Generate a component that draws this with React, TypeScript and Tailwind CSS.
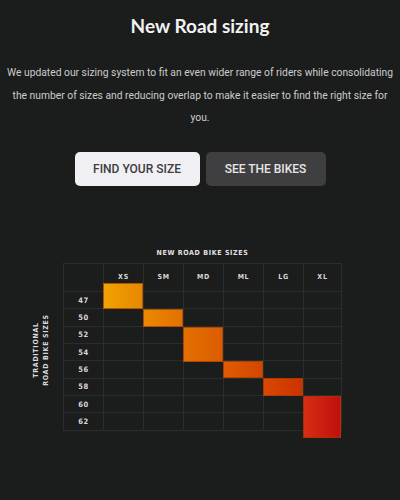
import React from "react";

const sizes = ["XS", "SM", "MD", "ML", "LG", "XL"];
const rows = ["47", "50", "52", "54", "56", "58", "60", "62"];

const blocks = [
  { left: 40, top: 20, w: 40, h: 26, from: "#f2a200", to: "#e68800" },
  { left: 80, top: 46, w: 40, h: 17.5, from: "#ec8a00", to: "#e27000" },
  { left: 120, top: 63.5, w: 40, h: 35, from: "#e47000", to: "#dc5c00" },
  { left: 160, top: 97.5, w: 40, h: 17.5, from: "#e05c00", to: "#d44600" },
  { left: 200, top: 115, w: 40, h: 17.5, from: "#da4800", to: "#cc3200" },
  { left: 240, top: 132.5, w: 38, h: 42, from: "#d62e12", to: "#c20e0e" },
];

export default function App() {
  const labelFont = { fontFamily: '"DejaVu Sans Condensed", "DejaVu Sans", sans-serif' };
  return (
    <div className="w-[400px] h-[500px] bg-[#1b1c1c] flex flex-col items-center pt-[14px] overflow-hidden">
      <h1
        className="text-[19px] leading-[24px] font-bold text-[#f2f2f2]"
        style={{ fontFamily: 'Lato, "Noto Sans", sans-serif' }}
      >
        New Road sizing
      </h1>
      <p
        className="mt-[24px] w-[400px] text-center text-[10.3px] leading-[22.5px] text-[#cccccc] font-normal"
        style={{ fontFamily: 'Roboto, "Liberation Sans", sans-serif' }}
      >
        We updated our sizing system to fit an even wider range of riders while consolidating
        <br />
        the number of sizes and reducing overlap to make it easier to find the right size for
        <br />
        you.
      </p>
      <div
        className="mt-[22.5px] flex gap-[6px]"
        style={{ fontFamily: 'Roboto, "Liberation Sans", sans-serif' }}
      >
        <button className="w-[125px] h-[34px] rounded-[5px] bg-[#f0eff4] text-[#3c3c3e] text-[12px] font-medium">
          FIND YOUR SIZE
        </button>
        <button className="w-[120px] h-[34px] rounded-[5px] bg-[#3f3f41] text-[#e6e6e6] text-[12px] font-medium">
          SEE THE BIKES
        </button>
      </div>

      <div className="self-stretch flex pl-[30px] mt-[62px]" style={labelFont}>
        <div className="w-[22px] mr-[11px] flex items-center justify-center pt-[22px]">
          <div className="-rotate-90 whitespace-nowrap text-center text-[7px] leading-[10px] font-bold tracking-[0.1em] text-[#d8d8d8]">
            TRADITIONAL
            <br />
            ROAD BIKE SIZES
          </div>
        </div>
        <div className="flex flex-col">
          <div className="h-[10px] leading-[10px] text-center text-[7px] font-bold tracking-[0.09em] text-[#e2e2e2]">
            NEW ROAD BIKE SIZES
          </div>
          <div className="relative mt-[5px]">
            <div className="grid grid-cols-[repeat(6,40px)_38px] grid-rows-[28px_repeat(8,17.33px)] border-l border-t border-[#2b2c2c]">
              <div className="border-r border-b border-[#2b2c2c]" />
              {sizes.map((s) => (
                <div
                  key={s}
                  className="border-r border-b border-[#2b2c2c] flex items-center justify-center text-[7px] font-bold tracking-[0.1em] text-[#d8d8d8]"
                >
                  {s}
                </div>
              ))}
              {rows.map((r) => (
                <React.Fragment key={r}>
                  <div className="border-r border-b border-[#2b2c2c] flex items-center justify-center text-[7.5px] font-bold tracking-[0.08em] text-[#d8d8d8]">
                    {r}
                  </div>
                  {sizes.map((s) => (
                    <div key={s} className="border-r border-b border-[#2b2c2c]" />
                  ))}
                </React.Fragment>
              ))}
            </div>
            {blocks.map((b, i) => (
              <div
                key={i}
                className="absolute border border-[#9a3a08]/70"
                style={{
                  left: b.left,
                  top: b.top,
                  width: b.w,
                  height: b.h,
                  background: `linear-gradient(to right, ${b.from}, ${b.to})`,
                }}
              />
            ))}
          </div>
        </div>
      </div>
    </div>
  );
}
